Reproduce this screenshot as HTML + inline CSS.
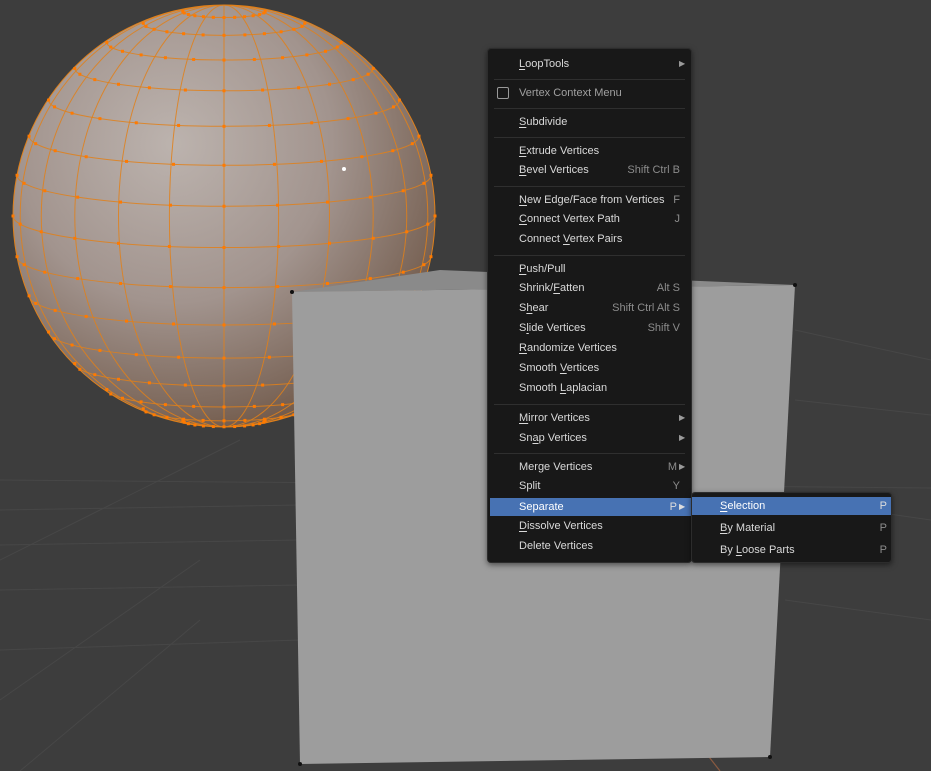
<!DOCTYPE html>
<html><head><style>
body{margin:0;width:931px;height:771px;overflow:hidden;background:#3d3d3d;font-family:"Liberation Sans","DejaVu Sans",sans-serif;}
#vp{position:absolute;left:0;top:0}
.menu{position:absolute;background:#181818;border:1px solid #2c2c2c;border-radius:4px;box-shadow:0 2px 6px rgba(0,0,0,.5)}
.t{position:absolute;font-size:11px;color:#d9d9d9;white-space:nowrap;line-height:14px}
.k{position:absolute;font-size:11px;color:#8c8c8c;white-space:nowrap;line-height:14px;text-align:right}
.sep{position:absolute;left:6px;right:6px;height:1px;background:#2f2f2f}
.ar{position:absolute;font-size:8px;color:#9a9a9a}
u{text-decoration:underline;text-underline-offset:2px}
</style></head><body>
<svg id="vp" width="931" height="771">
<defs>
<radialGradient id="sg" cx="0.38" cy="0.33" r="0.75">
<stop offset="0" stop-color="#bcb3ae"/><stop offset="0.5" stop-color="#a2948e"/><stop offset="0.85" stop-color="#7c675a"/><stop offset="1" stop-color="#6a4f3c"/></radialGradient>
<clipPath id="sc"><circle cx="224" cy="216" r="211"/></clipPath>
</defs>
<g stroke="#474747" stroke-width="1" fill="none">
<line x1="0" y1="480" x2="931" y2="488"/>
<line x1="0" y1="510" x2="300" y2="505"/>
<line x1="0" y1="545" x2="300" y2="540"/>
<line x1="0" y1="590" x2="300" y2="585"/>
<line x1="0" y1="650" x2="300" y2="640"/>
<line x1="795" y1="330" x2="931" y2="360"/>
<line x1="795" y1="400" x2="931" y2="415"/>
<line x1="0" y1="560" x2="240" y2="440"/>
<line x1="0" y1="700" x2="200" y2="560"/>
<line x1="790" y1="500" x2="931" y2="520"/>
<line x1="785" y1="600" x2="931" y2="620"/>
<line x1="20" y1="771" x2="200" y2="620"/>
</g>
<line x1="540" y1="540" x2="720" y2="771" stroke="#8a5a40" stroke-width="1.2"/>
<circle cx="224" cy="216" r="211" fill="url(#sg)"/>
<g id="wire" clip-path="url(#sc)" stroke="#e0801a" stroke-opacity="0.85" stroke-width="1" fill="none"></g>
<circle cx="224" cy="216" r="211" fill="none" stroke="#e0801a" stroke-width="1"/>
<g id="dots" fill="#ff7a00"></g>
<circle cx="344" cy="169" r="2" fill="#fff"/>
<polygon points="292,292 440,270 795,285" fill="#8a8a8a"/>
<polygon points="292,292 795,285 770,757 300,764" fill="#9d9d9d"/>
<circle cx="292" cy="292" r="2" fill="#111"/><circle cx="795" cy="285" r="2" fill="#111"/><circle cx="770" cy="757" r="2" fill="#111"/><circle cx="300" cy="764" r="2" fill="#111"/>
</svg>
<script>
(function(){var w=document.getElementById('wire'),d=document.getElementById('dots'),cx=224,cy=216,r=211,tilt=0.15,s='',ds='';
for(var i=-7;i<=7;i++){var la=i*Math.PI/16;var y=cy-r*Math.sin(la)*Math.cos(tilt);var rx=r*Math.cos(la),ry=r*Math.cos(la)*Math.sin(tilt);
s+='<path d="M'+(cx-rx)+','+y+' A'+rx+','+ry+' 0 0 0 '+(cx+rx)+','+y+'"/>';}
for(var j=-5;j<=5;j++){var th=j*Math.PI/12;var rx2=Math.abs(r*Math.sin(th));
if(rx2<0.5){s+='<line x1="'+cx+'" y1="'+(cy-r)+'" x2="'+cx+'" y2="'+(cy+r)+'"/>';continue;}
s+='<path d="M'+cx+','+(cy-r)+' A'+rx2+','+r+' 0 0 '+(j>0?1:0)+' '+cx+','+(cy+r)+'"/>';}
w.innerHTML=s;
for(var i=-7;i<=7;i++){var la=i*Math.PI/16;for(var j=-6;j<=6;j++){var lo=j*Math.PI/12;var x=Math.cos(la)*Math.sin(lo);
var py=cy-r*Math.sin(la)*Math.cos(tilt)+r*Math.cos(la)*Math.cos(lo)*Math.sin(tilt);var px=cx+r*x;ds+='<rect x="'+(px-1.5)+'" y="'+(py-1.5)+'" width="3" height="3"/>';}}
d.innerHTML=ds;})();
</script>
<div class="menu" style="left:487px;top:48px;width:203px;height:513px">
<div class="t" style="left:31px;top:8px"><u>L</u>oopTools</div><div class="ar" style="left:191px;top:10px">▶</div>
<div class="sep" style="top:30px"></div>
<div style="position:absolute;left:9px;top:38px;width:10px;height:10px;border:1px solid #999;border-radius:2px"></div>
<div class="t" style="left:31px;top:37px;color:#a0a0a0">Vertex Context Menu</div>
<div class="sep" style="top:59px"></div>
<div class="t" style="left:31px;top:66px"><u>S</u>ubdivide</div>
<div class="sep" style="top:88px"></div>
<div class="t" style="left:31px;top:95px"><u>E</u>xtrude Vertices</div>
<div class="t" style="left:31px;top:114px"><u>B</u>evel Vertices</div><div class="k" style="right:11px;top:114px">Shift Ctrl B</div>
<div class="sep" style="top:137px"></div>
<div class="t" style="left:31px;top:144px"><u>N</u>ew Edge/Face from Vertices</div><div class="k" style="right:11px;top:144px">F</div>
<div class="t" style="left:31px;top:163px"><u>C</u>onnect Vertex Path</div><div class="k" style="right:11px;top:163px">J</div>
<div class="t" style="left:31px;top:183px">Connect <u>V</u>ertex Pairs</div>
<div class="sep" style="top:206px"></div>
<div class="t" style="left:31px;top:213px"><u>P</u>ush/Pull</div>
<div class="t" style="left:31px;top:232px">Shrink/<u>F</u>atten</div><div class="k" style="right:11px;top:232px">Alt S</div>
<div class="t" style="left:31px;top:252px">S<u>h</u>ear</div><div class="k" style="right:11px;top:252px">Shift Ctrl Alt S</div>
<div class="t" style="left:31px;top:272px">S<u>l</u>ide Vertices</div><div class="k" style="right:11px;top:272px">Shift V</div>
<div class="t" style="left:31px;top:292px"><u>R</u>andomize Vertices</div>
<div class="t" style="left:31px;top:312px">Smooth <u>V</u>ertices</div>
<div class="t" style="left:31px;top:332px">Smooth <u>L</u>aplacian</div>
<div class="sep" style="top:355px"></div>
<div class="t" style="left:31px;top:362px"><u>M</u>irror Vertices</div><div class="ar" style="left:191px;top:364px">▶</div>
<div class="t" style="left:31px;top:382px">Sn<u>a</u>p Vertices</div><div class="ar" style="left:191px;top:384px">▶</div>
<div class="sep" style="top:404px"></div>
<div class="t" style="left:31px;top:411px">Merge Vertices</div><div class="k" style="right:14px;top:411px">M</div><div class="ar" style="left:191px;top:413px">▶</div>
<div class="t" style="left:31px;top:430px">Split</div><div class="k" style="right:11px;top:430px">Y</div>
<div style="position:absolute;left:2px;top:449px;width:201px;height:18px;background:#4772b3"></div>
<div class="t" style="left:31px;top:451px;color:#fff">Separate</div><div class="k" style="right:14px;top:451px;color:#ddd">P</div><div class="ar" style="left:191px;top:453px;color:#ddd">▶</div>
<div class="t" style="left:31px;top:470px"><u>D</u>issolve Vertices</div>
<div class="t" style="left:31px;top:490px">Delete Vertices</div>
</div>
<div class="menu" style="left:691px;top:492px;width:199px;height:69px">
<div style="position:absolute;left:0;top:4px;width:199px;height:18px;background:#4772b3"></div>
<div class="t" style="left:28px;top:6px;color:#fff"><u>S</u>election</div><div class="k" style="right:4px;top:6px;color:#ddd">P</div>
<div class="t" style="left:28px;top:28px"><u>B</u>y Material</div><div class="k" style="right:4px;top:28px">P</div>
<div class="t" style="left:28px;top:50px">By <u>L</u>oose Parts</div><div class="k" style="right:4px;top:50px">P</div>
</div>
</body></html>
